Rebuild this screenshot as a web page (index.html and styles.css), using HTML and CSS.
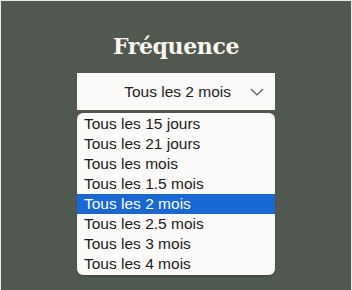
FILE: index.html
```html
<!DOCTYPE html>
<html lang="fr">
<head>
  <meta charset="UTF-8" />
  <title>Fréquence</title>
  <link rel="stylesheet" href="styles.css">
</head>
<body>

<div class="panel">
  <h2 class="title">Fréquence</h2>

  <div class="picker">
    <div class="select">
      <span class="select-value">Tous les 2 mois</span>
      <svg class="chevron" width="14" height="8" viewBox="0 0 14 8">
        <path d="M1 1 L7 7 L13 1" fill="none" stroke="#555" stroke-width="1.2" />
      </svg>
    </div>

    <ul class="options">
      <li>Tous les 15 jours</li>
      <li>Tous les 21 jours</li>
      <li>Tous les mois</li>
      <li>Tous les 1.5 mois</li>
      <li class="selected">Tous les 2 mois</li>
      <li>Tous les 2.5 mois</li>
      <li>Tous les 3 mois</li>
      <li>Tous les 4 mois</li>
    </ul>
  </div>
</div>

</body>
</html>
```

FILE: styles.css
```css
* { box-sizing: border-box; }
html, body {
  margin: 0; padding: 0;
  height: 100%;
  background: #505850;
  font-family: 'Liberation Sans', Arial, sans-serif;
}
.panel {
  height: 100%;
  border: 1px solid #e9ebe9;
  border-bottom: none;
  display: flex; flex-direction: column; align-items: center;
  padding-top: 30px;
}
.title {
  margin: 0 0 12px;
  font-family: 'DejaVu Serif', serif;
  font-weight: bold;
  font-size: 22px;
  line-height: 30px;
  color: #fbf6ee;
  letter-spacing: -0.4px;
}
.picker { width: 198px; }
.select {
  height: 37px;
  background: #faf9f7;
  display: flex; align-items: center; justify-content: flex-end;
  padding-right: 11px;
  font-size: 15.5px;
  color: #222;
}
.select-value { margin-right: 19px; }
.options {
  list-style: none;
  margin: 3px 0 0; padding: 1px 0;
  background: #fbfaf8;
  border-radius: 6px;
  overflow: hidden;
  box-shadow: 0 1px 2px rgba(0,0,0,0.25);
}
.options li {
  height: 20px; line-height: 20px;
  padding-left: 7px;
  font-size: 15.5px;
  color: #1c1c1c;
}
.options li.selected { background: #1967d2; color: #fff; }
```
